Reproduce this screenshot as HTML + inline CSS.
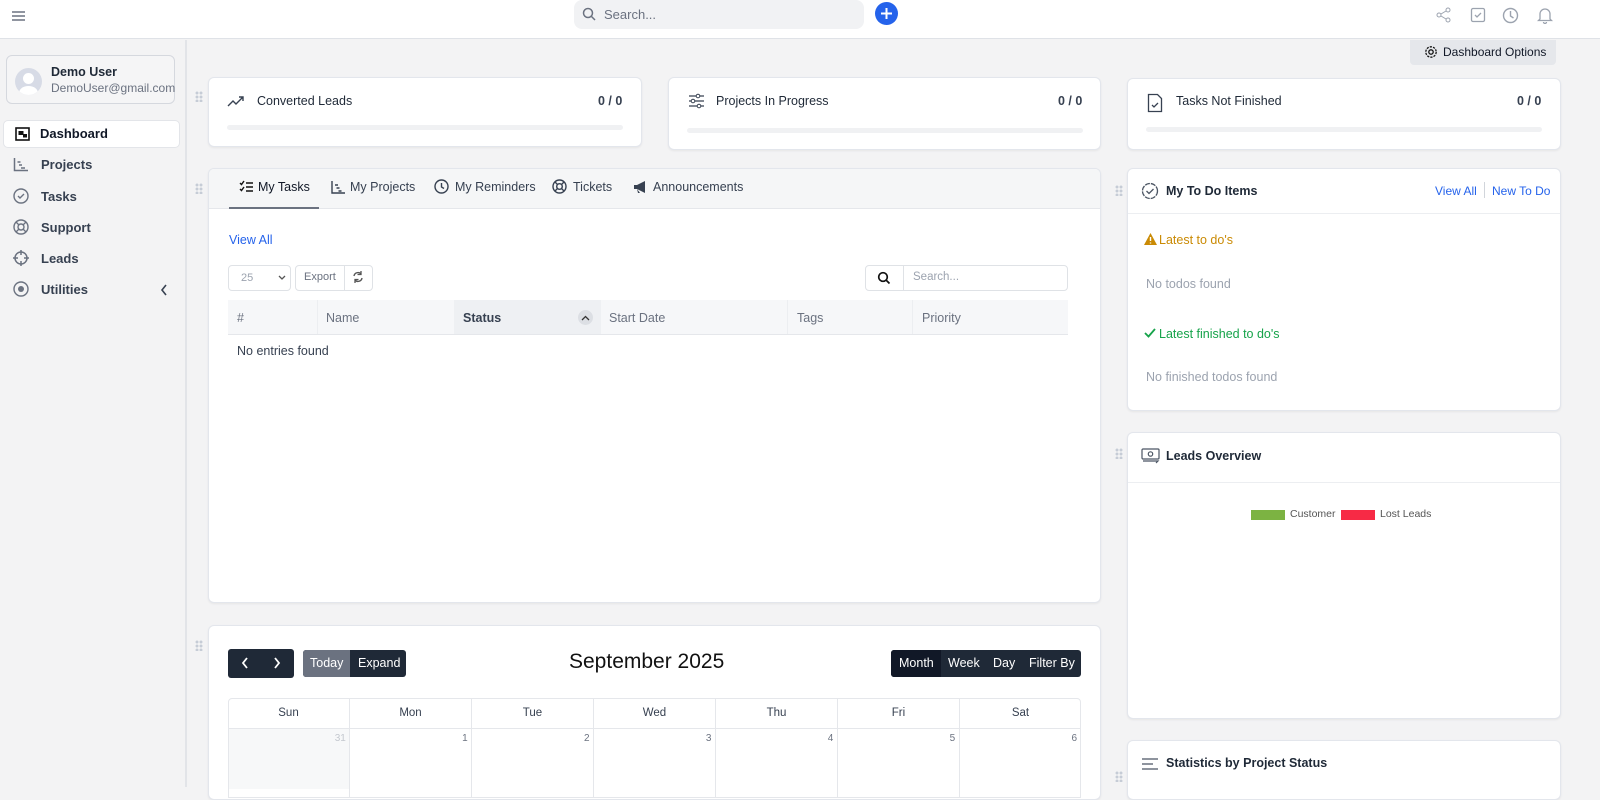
<!DOCTYPE html>
<html><head><meta charset="utf-8"><style>
*{box-sizing:border-box;margin:0;padding:0}
body{width:1600px;height:787px;overflow:hidden;background:#f3f3f4;font-family:"Liberation Sans",Arial,sans-serif;color:#1f2937;position:relative;font-size:13px}
.a{position:absolute}
.card{position:absolute;background:#fff;border:1px solid #e3e6ec;border-radius:6px;box-shadow:0 1px 2px rgba(0,0,0,.06)}
.grip{position:absolute;width:8px;height:11px;background:radial-gradient(circle,#c6ccd6 1.3px,transparent 1.6px) 0 0/4px 4px}
svg{display:block}
.nav{position:absolute;left:12px;display:flex;align-items:center;font-size:13px;color:#374151;font-weight:bold}
.nav svg{margin-right:12px}
</style></head><body>
<!-- topbar -->
<div class="a" style="left:0;top:0;width:1600px;height:39px;background:#fff;border-bottom:1px solid #dfe2e7"></div>
<svg class="a" style="left:12px;top:10px" width="14" height="12"><path d="M0 2h13M0 6h13M0 10h13" stroke="#6b7280" stroke-width="1.4"/></svg>
<div class="a" style="left:574px;top:0;width:290px;height:29px;background:#f1f2f4;border-radius:8px"></div>
<svg class="a" style="left:582px;top:7px" width="14" height="14"><circle cx="6" cy="6" r="4.5" fill="none" stroke="#6b7280" stroke-width="1.5"/><path d="M9.5 9.5L13 13" stroke="#6b7280" stroke-width="1.5"/></svg>
<div class="a" style="left:604px;top:7px;font-size:13px;color:#6b7280">Search...</div>
<div class="a" style="left:875px;top:2px;width:23px;height:23px;border-radius:50%;background:#2563eb"></div>
<svg class="a" style="left:875px;top:2px" width="23" height="23"><path d="M11.5 6v11M6 11.5h11" stroke="#fff" stroke-width="2"/></svg>
<svg class="a" style="left:1436px;top:7px" width="16" height="16"><circle cx="12" cy="3" r="2" fill="none" stroke="#9ca3af"/><circle cx="3" cy="8" r="2" fill="none" stroke="#9ca3af"/><circle cx="12" cy="13" r="2" fill="none" stroke="#9ca3af"/><path d="M5 7l5-3M5 9l5 3" stroke="#9ca3af"/></svg>
<svg class="a" style="left:1470px;top:7px" width="16" height="16"><rect x="1.5" y="1.5" width="13" height="13" rx="1.5" fill="none" stroke="#9ca3af" stroke-width="1.3"/><path d="M5 8l2 2 4-4" fill="none" stroke="#9ca3af" stroke-width="1.3"/></svg>
<svg class="a" style="left:1502px;top:7px" width="17" height="17"><circle cx="8.5" cy="8.5" r="7" fill="none" stroke="#9ca3af" stroke-width="1.4"/><path d="M8.5 4v5l3 2" fill="none" stroke="#9ca3af" stroke-width="1.4"/></svg>
<svg class="a" style="left:1537px;top:7px" width="16" height="17"><path d="M3 12V7a5 5 0 0110 0v5l1.5 1.5h-13z M6.5 15a1.5 1.5 0 003 0" fill="none" stroke="#9ca3af" stroke-width="1.3"/></svg>

<!-- sidebar -->
<div class="a" style="left:0;top:40px;width:187px;height:747px;background:#f3f3f4;border-right:2px solid #e2e4e8"></div>
<div class="a" style="left:6px;top:55px;width:169px;height:49px;border:1px solid #d5d8de;border-radius:6px;background:#f5f5f6"></div>
<div class="a" style="left:15px;top:68px;width:27px;height:27px;border-radius:50%;background:#d7dbe6;overflow:hidden"><div style="position:absolute;left:8px;top:5px;width:11px;height:11px;border-radius:50%;background:#fff"></div><div style="position:absolute;left:4px;top:18px;width:19px;height:14px;border-radius:50%;background:#fff"></div></div>
<div class="a" style="left:51px;top:65px;font-size:12.5px;font-weight:bold;color:#1f2937">Demo User</div>
<div class="a" style="left:51px;top:81px;font-size:12px;color:#6b7280">DemoUser@gmail.com</div>
<div class="a" style="left:3px;top:120px;width:177px;height:28px;background:#fff;border:1px solid #e3e5e9;border-radius:5px"></div>
<div class="nav" style="top:126px;left:15px;color:#111827"><svg width="15" height="14"><rect x="1" y="1" width="13" height="12" fill="none" stroke="#111" stroke-width="1.6"/><rect x="3.5" y="4" width="5" height="4" fill="#111"/><rect x="8" y="7" width="4" height="3.5" fill="#111"/></svg><span style="margin-left:-2px">Dashboard</span></div>
<div class="nav" style="top:157px;left:13px"><svg width="16" height="15"><path d="M1.5 1v12.5H15M4.5 5h3M6 8h3M8 11h4" fill="none" stroke="#6b7280" stroke-width="1.5"/></svg>Projects</div>
<div class="nav" style="top:188px;left:13px"><svg width="16" height="16"><circle cx="8" cy="8" r="7" fill="none" stroke="#6b7280" stroke-width="1.4"/><path d="M5 8l2 2 4-4" fill="none" stroke="#6b7280" stroke-width="1.4"/></svg>Tasks</div>
<div class="nav" style="top:219px;left:13px"><svg width="16" height="16"><circle cx="8" cy="8" r="7" fill="none" stroke="#6b7280" stroke-width="1.4"/><circle cx="8" cy="8" r="3" fill="none" stroke="#6b7280" stroke-width="1.4"/><path d="M3 3l3 3M13 3l-3 3M3 13l3-3M13 13l-3-3" stroke="#6b7280" stroke-width="1.4"/></svg>Support</div>
<div class="nav" style="top:250px;left:13px"><svg width="16" height="16"><circle cx="8" cy="8" r="6" fill="none" stroke="#6b7280" stroke-width="1.5"/><path d="M8 0v5M8 11v5M0 8h5M11 8h5" stroke="#6b7280" stroke-width="1.5"/></svg>Leads</div>
<div class="nav" style="top:281px;left:13px"><svg width="16" height="16"><circle cx="8" cy="8" r="7" fill="none" stroke="#6b7280" stroke-width="1.4"/><circle cx="8" cy="8" r="3" fill="#6b7280"/></svg>Utilities</div>
<svg class="a" style="left:160px;top:284px" width="8" height="12"><path d="M6 1L2 6l4 5" fill="none" stroke="#374151" stroke-width="1.6"/></svg>

<!-- dashboard options -->
<div class="a" style="left:1410px;top:40px;width:146px;height:25px;background:#e5e7eb;border-radius:0 0 4px 4px"></div>
<svg class="a" style="left:1424px;top:45px" width="14" height="14"><circle cx="7" cy="7" r="2.2" fill="none" stroke="#111" stroke-width="1.3"/><circle cx="7" cy="7" r="5.2" fill="none" stroke="#111" stroke-width="1.3" stroke-dasharray="2.2 1.1"/></svg>
<div class="a" style="left:1443px;top:45px;font-size:12px;color:#111827">Dashboard Options</div>

<!-- stat cards -->
<div class="grip" style="left:195px;top:91px"></div>
<div class="card" style="left:208px;top:77px;width:434px;height:70px"></div>
<svg class="a" style="left:227px;top:95px" width="19" height="12"><path d="M1 11l5-5 3 3 7-7M12 2h4v4" fill="none" stroke="#374151" stroke-width="1.4"/></svg>
<div class="a" style="left:257px;top:94px;font-size:12.5px">Converted Leads</div>
<div class="a" style="left:598px;top:94px;font-size:12.5px;font-weight:bold;color:#374151">0 / 0</div>
<div class="a" style="left:227px;top:125px;width:396px;height:5px;background:#f0f1f3;border-radius:3px"></div>

<div class="card" style="left:668px;top:77px;width:433px;height:73px"></div>
<svg class="a" style="left:688px;top:93px" width="17" height="16"><path d="M1 3h15M1 8h15M1 13h15" stroke="#374151" stroke-width="1.3"/><circle cx="10" cy="3" r="1.8" fill="#fff" stroke="#374151"/><circle cx="5" cy="8" r="1.8" fill="#fff" stroke="#374151"/><circle cx="11" cy="13" r="1.8" fill="#fff" stroke="#374151"/></svg>
<div class="a" style="left:716px;top:94px;font-size:12.5px">Projects In Progress</div>
<div class="a" style="left:1058px;top:94px;font-size:12.5px;font-weight:bold;color:#374151">0 / 0</div>
<div class="a" style="left:687px;top:128px;width:396px;height:5px;background:#f0f1f3;border-radius:3px"></div>

<div class="card" style="left:1127px;top:78px;width:434px;height:72px"></div>
<svg class="a" style="left:1147px;top:93px" width="16" height="20"><path d="M1.5 1.5h9l4 4v13h-13z" fill="none" stroke="#374151" stroke-width="1.3"/><path d="M5 12l2 2 4-4" fill="none" stroke="#374151" stroke-width="1.3"/></svg>
<div class="a" style="left:1176px;top:94px;font-size:12.5px">Tasks Not Finished</div>
<div class="a" style="left:1517px;top:94px;font-size:12.5px;font-weight:bold;color:#374151">0 / 0</div>
<div class="a" style="left:1146px;top:127px;width:396px;height:5px;background:#f0f1f3;border-radius:3px"></div>

<!-- tasks card -->
<div class="grip" style="left:195px;top:183px"></div>
<div class="card" style="left:208px;top:168px;width:893px;height:435px;overflow:hidden">
  <div style="position:absolute;left:0;top:0;width:100%;height:40px;background:#f5f6f7;border-bottom:1px solid #e5e7eb"></div>
  <div style="position:absolute;left:20px;top:38px;width:90px;height:2px;background:#6b7280"></div>
</div>
<svg class="a" style="left:239px;top:180px" width="14" height="13"><path d="M1 3l1.5 1.5L5 1M1 9l1.5 1.5L5 7M7 3h7M7 7h7M7 11h7" fill="none" stroke="#111" stroke-width="1.4"/></svg>
<div class="a" style="left:258px;top:180px;font-size:12.5px;color:#111827">My Tasks</div>
<svg class="a" style="left:331px;top:180px" width="15" height="14"><path d="M1 1v12h13M4 5h3M5.5 8h3M7.5 11h3" fill="none" stroke="#374151" stroke-width="1.4"/></svg>
<div class="a" style="left:350px;top:180px;font-size:12.5px;color:#374151">My Projects</div>
<svg class="a" style="left:434px;top:179px" width="15" height="15"><circle cx="7.5" cy="7.5" r="6.5" fill="none" stroke="#374151" stroke-width="1.4"/><path d="M7.5 4v4l2.5 1.5" fill="none" stroke="#374151" stroke-width="1.4"/></svg>
<div class="a" style="left:455px;top:180px;font-size:12.5px;color:#374151">My Reminders</div>
<svg class="a" style="left:552px;top:179px" width="15" height="15"><circle cx="7.5" cy="7.5" r="6.5" fill="none" stroke="#374151" stroke-width="1.4"/><circle cx="7.5" cy="7.5" r="2.8" fill="none" stroke="#374151" stroke-width="1.4"/><path d="M3 3l2.5 2.5M12 3L9.5 5.5M3 12l2.5-2.5M12 12L9.5 9.5" stroke="#374151" stroke-width="1.4"/></svg>
<div class="a" style="left:573px;top:180px;font-size:12.5px;color:#374151">Tickets</div>
<svg class="a" style="left:633px;top:180px" width="16" height="14"><path d="M1 5h3l8-4v12L4 9H1z M4 9l1 4h2" fill="#374151"/></svg>
<div class="a" style="left:653px;top:180px;font-size:12.5px;color:#374151">Announcements</div>
<div class="a" style="left:229px;top:233px;font-size:12.5px;color:#2563eb">View All</div>
<div class="a" style="left:228px;top:265px;width:63px;height:26px;border:1px solid #dfe2e6;border-radius:4px;font-size:11px;color:#9ca3af;padding:6px 12px">25</div>
<svg class="a" style="left:278px;top:275px" width="8" height="6"><path d="M1 1l3 3 3-3" fill="none" stroke="#555" stroke-width="1.3"/></svg>
<div class="a" style="left:295px;top:265px;width:78px;height:26px;border:1px solid #dfe2e6;border-radius:4px"></div>
<div class="a" style="left:344px;top:266px;width:1px;height:24px;background:#dfe2e6"></div>
<div class="a" style="left:304px;top:271px;font-size:11px;color:#6b7280">Export</div>
<svg class="a" style="left:352px;top:271px" width="12" height="12"><path d="M2 5a4 4 0 017-2M10 7a4 4 0 01-7 2" fill="none" stroke="#555" stroke-width="1.4"/><path d="M9 0v3.5H5.5M3 12V8.5h3.5" fill="none" stroke="#555" stroke-width="1.3"/></svg>
<div class="a" style="left:865px;top:265px;width:203px;height:26px;border:1px solid #dfe2e6;border-radius:4px"></div>
<div class="a" style="left:903px;top:266px;width:1px;height:24px;background:#dfe2e6"></div>
<svg class="a" style="left:877px;top:271px" width="14" height="14"><circle cx="6" cy="6" r="4.3" fill="none" stroke="#111" stroke-width="1.7"/><path d="M9 9l3.5 3.5" stroke="#111" stroke-width="1.7"/></svg>
<div class="a" style="left:913px;top:271px;font-size:11.5px;color:#9ca3af">Search...</div>
<div class="a" style="left:228px;top:300px;width:840px;height:35px;background:#f6f7f9;border-bottom:1px solid #e5e7eb"></div>
<div class="a" style="left:317px;top:300px;width:1px;height:34px;background:#eceef1"></div>
<div class="a" style="left:454px;top:300px;width:147px;height:34px;background:#eef0f3"></div>
<div class="a" style="left:787px;top:300px;width:1px;height:34px;background:#eceef1"></div>
<div class="a" style="left:912px;top:300px;width:1px;height:34px;background:#eceef1"></div>
<div class="a" style="left:237px;top:311px;font-size:12.5px;color:#6b7280">#</div>
<div class="a" style="left:326px;top:311px;font-size:12.5px;color:#6b7280">Name</div>
<div class="a" style="left:463px;top:311px;font-size:12.5px;color:#374151;font-weight:bold">Status</div>
<div class="a" style="left:578px;top:310px;width:15px;height:15px;border-radius:50%;background:#dcdfe4"></div>
<svg class="a" style="left:581px;top:315px" width="9" height="6"><path d="M1 5l3.5-3.5L8 5" fill="none" stroke="#333" stroke-width="1.3"/></svg>
<div class="a" style="left:609px;top:311px;font-size:12.5px;color:#6b7280">Start Date</div>
<div class="a" style="left:797px;top:311px;font-size:12.5px;color:#6b7280">Tags</div>
<div class="a" style="left:922px;top:311px;font-size:12.5px;color:#6b7280">Priority</div>
<div class="a" style="left:237px;top:344px;font-size:12.5px;color:#374151">No entries found</div>

<!-- calendar -->
<div class="grip" style="left:195px;top:640px"></div>
<div class="card" style="left:208px;top:625px;width:893px;height:175px"></div>
<div class="a" style="left:228px;top:649px;width:66px;height:29px;background:#1f2937;border-radius:3px"></div>
<svg class="a" style="left:240px;top:657px" width="44" height="12"><path d="M7 1L3 6l4 5M35 1l4 5-4 5" fill="none" stroke="#fff" stroke-width="1.8"/></svg>
<div class="a" style="left:303px;top:650px;width:103px;height:27px;background:#1f2937;border-radius:3px;overflow:hidden"><div style="width:47px;height:27px;background:#6b7280"></div></div>
<div class="a" style="left:310px;top:656px;font-size:12.5px;color:#fff">Today</div>
<div class="a" style="left:358px;top:656px;font-size:12.5px;color:#fff">Expand</div>
<div class="a" style="left:569px;top:650px;font-size:21px;color:#111">September 2025</div>
<div class="a" style="left:891px;top:650px;width:190px;height:27px;background:#1f2937;border-radius:3px;overflow:hidden"><div style="width:50px;height:27px;background:#111827"></div></div>
<div class="a" style="left:899px;top:656px;font-size:12.5px;color:#fff">Month</div>
<div class="a" style="left:948px;top:656px;font-size:12.5px;color:#fff">Week</div>
<div class="a" style="left:993px;top:656px;font-size:12.5px;color:#fff">Day</div>
<div class="a" style="left:1029px;top:656px;font-size:12.5px;color:#fff">Filter By</div>
<div class="a" style="left:228px;top:698px;width:853px;height:100px;border:1px solid #e5e7eb;border-radius:4px 4px 0 0"></div>
<div class="a" style="left:228px;top:728px;width:853px;height:1px;background:#e5e7eb"></div>
<div class="a" style="left:229px;top:729px;width:121px;height:60px;background:#f7f8f9"></div>
<div class="a" style="left:228px;top:698px;width:853px;height:100px;display:flex;font-size:11.5px;color:#374151;line-height:30px">
<div style="flex:1;text-align:center">Sun</div><div style="flex:1;text-align:center;border-left:1px solid #e5e7eb">Mon</div><div style="flex:1;text-align:center;border-left:1px solid #e5e7eb">Tue</div><div style="flex:1;text-align:center;border-left:1px solid #e5e7eb">Wed</div><div style="flex:1;text-align:center;border-left:1px solid #e5e7eb">Thu</div><div style="flex:1;text-align:center;border-left:1px solid #e5e7eb">Fri</div><div style="flex:1;text-align:center;border-left:1px solid #e5e7eb">Sat</div></div>
<div class="a" style="left:228px;top:733px;width:853px;display:flex;font-size:10px;color:#6b7280">
<div style="flex:1;text-align:right;padding-right:4px;color:#c4c8cf">31</div><div style="flex:1;text-align:right;padding-right:4px">1</div><div style="flex:1;text-align:right;padding-right:4px">2</div><div style="flex:1;text-align:right;padding-right:4px">3</div><div style="flex:1;text-align:right;padding-right:4px">4</div><div style="flex:1;text-align:right;padding-right:4px">5</div><div style="flex:1;text-align:right;padding-right:4px">6</div></div>

<!-- todo -->
<div class="grip" style="left:1115px;top:185px"></div>
<div class="card" style="left:1127px;top:168px;width:434px;height:243px"><div style="position:absolute;left:0;top:44px;width:100%;height:1px;background:#eceef1"></div></div>
<svg class="a" style="left:1141px;top:182px" width="18" height="18"><circle cx="9" cy="9" r="7.5" fill="none" stroke="#4b5563" stroke-width="1.3" stroke-dasharray="5 1"/><path d="M5.5 9l2.5 2.5 4.5-4.5" fill="none" stroke="#4b5563" stroke-width="1.3"/></svg>
<div class="a" style="left:1166px;top:184px;font-size:12.5px;font-weight:bold;color:#1f2937">My To Do Items</div>
<div class="a" style="left:1435px;top:184px;font-size:12px;color:#2563eb">View All</div>
<div class="a" style="left:1484px;top:182px;width:1px;height:16px;background:#d1d5db"></div>
<div class="a" style="left:1492px;top:184px;font-size:12px;color:#2563eb">New To Do</div>
<svg class="a" style="left:1144px;top:233px" width="13" height="12"><path d="M6.5 0L13 12H0z" fill="#ca8a04"/><path d="M6.5 4v4M6.5 9.5v1" stroke="#fff" stroke-width="1.4"/></svg>
<div class="a" style="left:1159px;top:233px;font-size:12.5px;color:#ca8a04">Latest to do's</div>
<div class="a" style="left:1146px;top:277px;font-size:12.5px;color:#9ca3af">No todos found</div>
<svg class="a" style="left:1144px;top:328px" width="12" height="10"><path d="M1 5l3.5 3.5L11 1" fill="none" stroke="#16a34a" stroke-width="1.8"/></svg>
<div class="a" style="left:1159px;top:327px;font-size:12.5px;color:#16a34a">Latest finished to do's</div>
<div class="a" style="left:1146px;top:370px;font-size:12.5px;color:#9ca3af">No finished todos found</div>

<!-- leads -->
<div class="grip" style="left:1115px;top:448px"></div>
<div class="card" style="left:1127px;top:432px;width:434px;height:287px"><div style="position:absolute;left:0;top:49px;width:100%;height:1px;background:#eceef1"></div></div>
<svg class="a" style="left:1141px;top:447px" width="20" height="17"><rect x="1" y="2" width="17" height="10" rx="1" fill="none" stroke="#4b5563" stroke-width="1.2"/><circle cx="9.5" cy="7" r="2.2" fill="none" stroke="#4b5563" stroke-width="1.2"/><path d="M2 14h15l-2 2" fill="none" stroke="#4b5563" stroke-width="1.2"/></svg>
<div class="a" style="left:1166px;top:449px;font-size:12.5px;font-weight:bold;color:#1f2937">Leads Overview</div>
<div class="a" style="left:1251px;top:510px;width:34px;height:10px;background:#7cb342"></div>
<div class="a" style="left:1290px;top:508px;font-size:10.5px;color:#555">Customer</div>
<div class="a" style="left:1341px;top:510px;width:34px;height:10px;background:#f72a45"></div>
<div class="a" style="left:1380px;top:508px;font-size:10.5px;color:#555">Lost Leads</div>

<!-- stats -->
<div class="grip" style="left:1115px;top:771px"></div>
<div class="card" style="left:1127px;top:740px;width:434px;height:60px"></div>
<svg class="a" style="left:1142px;top:757px" width="17" height="14"><path d="M0 2h16M0 7h11M0 12h16" stroke="#4b5563" stroke-width="1.3"/></svg>
<div class="a" style="left:1166px;top:756px;font-size:12.5px;font-weight:bold;color:#1f2937">Statistics by Project Status</div>
</body></html>
